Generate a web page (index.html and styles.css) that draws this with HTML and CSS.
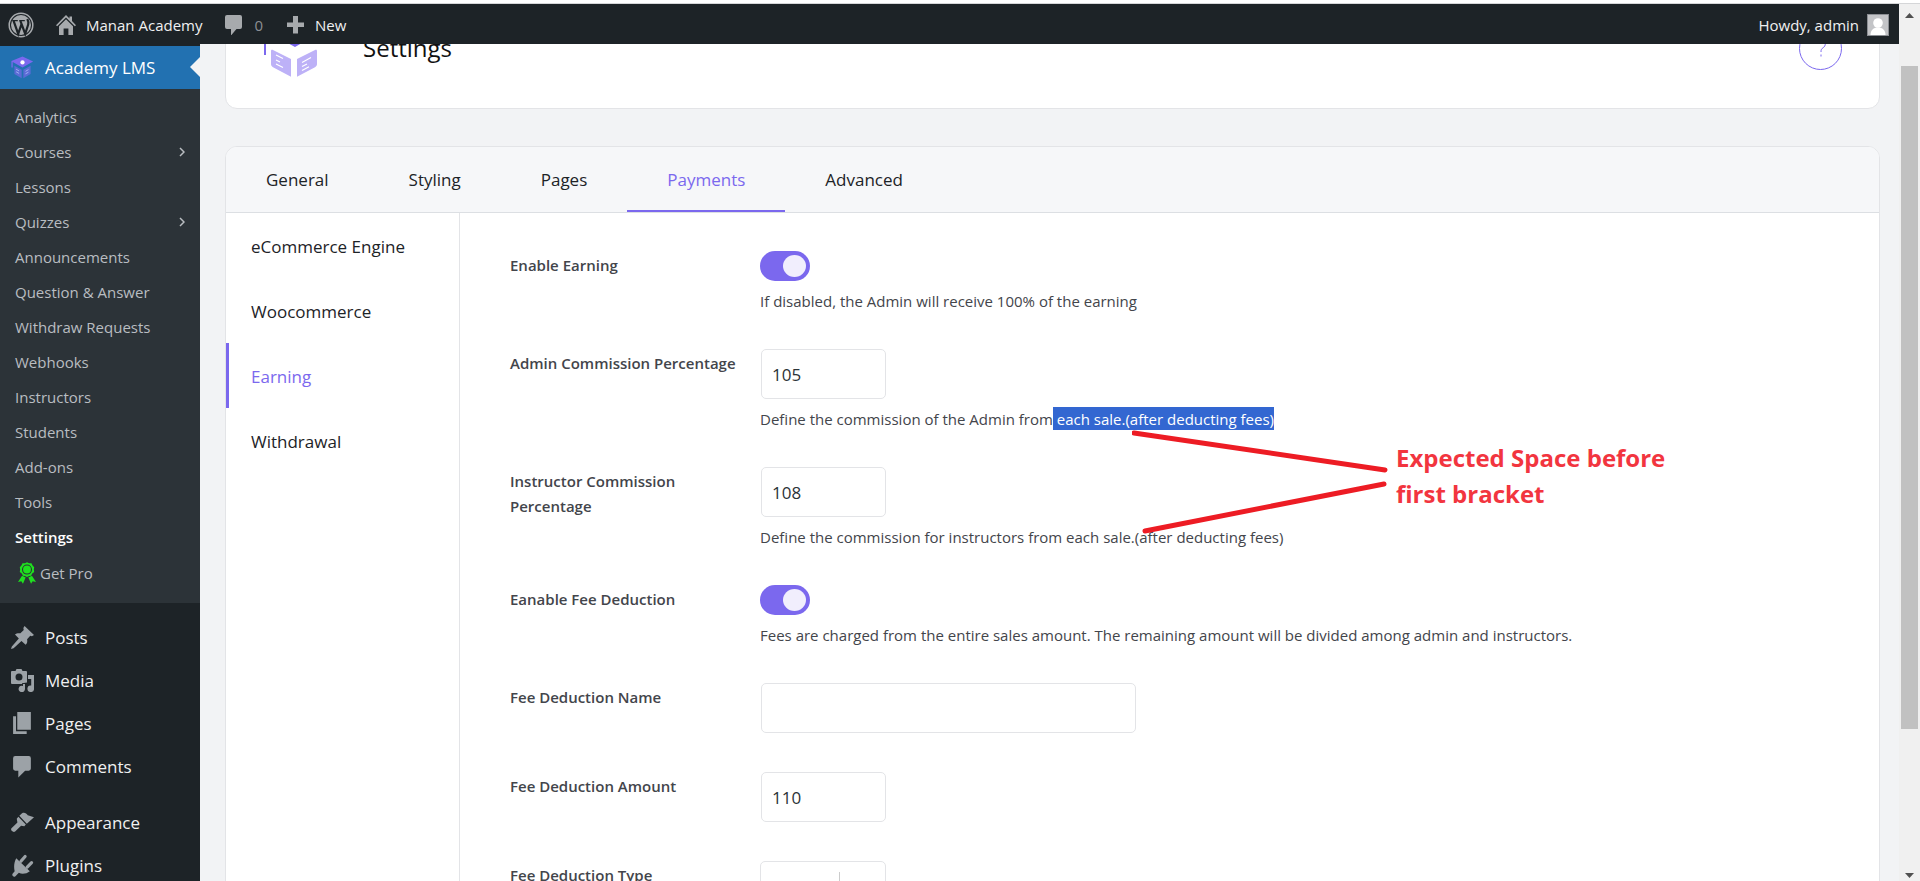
FILE: index.html
```html
<!DOCTYPE html>
<html lang="en">
<head>
<meta charset="utf-8">
<title>Settings - Academy LMS</title>
<meta name="viewport" content="width=device-width, initial-scale=1">
<link rel="stylesheet" href="styles.css">
</head>
<body>
<div class="window">
  <div class="page">
    <header class="adminbar">
      <a class="adminbar-item" href="#" aria-label="WordPress">
        <svg class="icon-wp" viewBox="0 0 26 26"><circle cx="13" cy="13" r="11.8" fill="none" stroke="#a7aaad" stroke-width="1.5"/><circle cx="13" cy="13" r="10" fill="#a7aaad"/><g fill="none" stroke="#1d2327" stroke-linejoin="miter"><path d="M4.2 8.6h5.6M11.2 8.6h5.6" stroke-width="1.2"/><path d="M5.6 8.8l4.6 13 3.3-9.6M12.4 8.8l4.8 13 3-9.3c.7-2.3.1-3.500-.9-5.400" stroke-width="2.200"/></g></svg>
      </a>
      <a class="adminbar-item" href="#">
        <svg class="icon-20" viewBox="0 0 20 20"><path fill="#a7aaad" d="M10 0l3.500 3.500V1.500H16V6l4 4.200-1.200 1.100L10 2.600 1.200 11.300 0 10.200zM10 4.200l7 7V20h-4.600v-6.500H7.600V20H3v-8.800z"/></svg>
        Manan Academy
      </a>
      <a class="adminbar-item muted" href="#">
        <svg class="icon-20" viewBox="0 0 20 20"><path fill="#a7aaad" d="M3 0h13a2 2 0 0 1 2 2v10a2 2 0 0 1-2 2h-3.500L7 20.500V14H3a2 2 0 0 1-2-2V2a2 2 0 0 1 2-2z"/></svg>
        0
      </a>
      <a class="adminbar-item" href="#">
        <svg class="icon-20" viewBox="0 0 20 20"><path fill="#a7aaad" d="M8 1h5v6.500h6v4.500h-6v6.500H8V12H2V7.500h6z"/></svg>
        New
      </a>
      <a class="adminbar-item account" href="#">
        Howdy, admin
        <svg class="avatar" viewBox="0 0 22 22"><rect x=".5" y=".5" width="21" height="21" fill="#c3c4c7" stroke="#8c8f94"/><circle cx="11" cy="9" r="4.800" fill="#fff"/><path d="M3.500 21c0-5 3-7.500 7.500-7.500s7.500 2.500 7.500 7.500z" fill="#fff"/></svg>
      </a>
    </header>

    <div class="body">
      <nav class="sidebar" aria-label="Main menu">
        <a class="menu-item current" href="#">
          <svg class="menu-icon logo-small" viewBox="0 0 54 54"><path fill="#7b68ee" d="M27 1L52 13 27 27 4 14v13H1V12z"/><circle cx="27" cy="15" r="5" fill="#fff"/><path fill="#5b6bd6" d="M8 23l17 9v20L8 42zM46 23l-17 9v20l17-10z"/><path d="M12 31l7 4M12 37l7 4M34 36l7-4M34 42l7-4" stroke="#a9b8f5" stroke-width="2"/></svg>
          Academy LMS
        </a>
        <ul class="submenu">
          <li><a href="#">Analytics</a></li>
          <li><a href="#">Courses<svg class="chevron" viewBox="0 0 6 10"><path d="M1 1l4 4-4 4"/></svg></a></li>
          <li><a href="#">Lessons</a></li>
          <li><a href="#">Quizzes<svg class="chevron" viewBox="0 0 6 10"><path d="M1 1l4 4-4 4"/></svg></a></li>
          <li><a href="#">Announcements</a></li>
          <li><a href="#">Question &amp; Answer</a></li>
          <li><a href="#">Withdraw Requests</a></li>
          <li><a href="#">Webhooks</a></li>
          <li><a href="#">Instructors</a></li>
          <li><a href="#">Students</a></li>
          <li><a href="#">Add-ons</a></li>
          <li><a href="#">Tools</a></li>
          <li><a class="active" href="#">Settings</a></li>
          <li><a class="get-pro" href="#"><svg class="ribbon" viewBox="0 0 20 24"><g fill="#1fe01f"><path d="M10 0l2.300 1.300 2.700 0 1.200 2.400L18 5.600 17.600 8.200 18 11l-2.200 1.600L14.500 15l-2.300.3L10 16.500 7.800 15.300 5.500 15 4.200 12.600 2 11l.4-2.800L2 5.600l1.800-1.900L5 1.300h2.700z"/><path d="M4.500 15l4 2-3 7-1.800-2.800L0 22zM15.500 15l-4 2 3 7 1.800-2.800L20 22z"/></g><circle cx="10" cy="8.200" r="5" fill="none" stroke="#2c3338" stroke-width="1.200"/></svg>Get Pro</a></li>
        </ul>
        <a class="menu-item" href="#">
          <svg class="menu-icon" viewBox="0 0 22 22"><path fill="#9ca2a7" d="M13 0l9 8.500-2 1.200-1.600-.3-3 3.200c.5 2.200 0 4-1.400 5.400l-4-3.700L2.500 21.300 0 22l.8-2.400L7.500 12 3.800 8.200C5.200 6.900 7 6.600 9 7l3.200-3.200-.4-1.800z"/></svg>
          Posts
        </a>
        <a class="menu-item" href="#">
          <svg class="menu-icon" viewBox="0 0 23 23"><path fill="#9ca2a7" fill-rule="evenodd" d="M1 2h3.500L5.500 0h5l1 2H15a1 1 0 0 1 1 1v10.500l-5 .8V15H1a1 1 0 0 1-1-1V3a1 1 0 0 1 1-1zM8 4.500a3.500 3.500 0 1 0 0 7 3.500 3.500 0 0 0 0-7z"/><path fill="#9ca2a7" d="M17 6h6v13.500a3.300 3.300 0 1 1-2.800-3V10H17zM12 15h2v5a3.200 3.200 0 1 1-2-3z"/></svg>
          Media
        </a>
        <a class="menu-item" href="#">
          <svg class="menu-icon" viewBox="0 0 22 22"><path fill="#9ca2a7" d="M6 0h13v17H6zM2 4h2.800v14.500H15V21H2z"/></svg>
          Pages
        </a>
        <a class="menu-item" href="#">
          <svg class="menu-icon" viewBox="0 0 22 22"><path fill="#9ca2a7" d="M4 1h13a2 2 0 0 1 2 2v10a2 2 0 0 1-2 2h-3.500L7 21.500V15H4a2 2 0 0 1-2-2V3a2 2 0 0 1 2-2z"/></svg>
          Comments
        </a>
        <a class="menu-item group-start" href="#">
          <svg class="menu-icon" viewBox="0 0 24 21"><path fill="#9ca2a7" d="M11.500.8C14-.5 16 .8 17.500 3l6.500 2-7.500 6.700L8.700 3.500zM7.700 4.500l7.800 8.200-1.600 1.600-3.400-.5-6.200 6C2.500 21.500-1.200 18.500.5 16.500l6.200-6L6 6.700z"/></svg>
          Appearance
        </a>
        <a class="menu-item" href="#">
          <svg class="menu-icon" viewBox="0 0 22 22"><path fill="#9ca2a7" d="M5 4l13 12.500c-3 2.500-7.500 3.200-10.500 1.500L4 21.500c-1.500 1-3.500-.8-2.500-2.500l2-2.500C2.500 12.500 3 7.500 5 4z"/><path d="M9.500 7l4-4.700M15.500 12.500l4.200-4.300" stroke="#9ca2a7" stroke-width="3" stroke-linecap="round"/></svg>
          Plugins
        </a>
      </nav>

      <main class="content">
        <section class="card page-head">
          <svg class="logo" viewBox="0 0 56 58"><path fill="#7b68ee" d="M31 0L57 13 31 28 7 15 2 12.500V36H0V12z"/><g fill="#bdb1f7"><path d="M9 31c-1.500-.8-2 0-2 1v13c0 1.500.6 2.400 2 3.200l18 9.600V40zM51 31c1.500-.8 2 0 2 1v13c0 1.500-.6 2.400-2 3.200L33 57.800V40z"/></g><path d="M12 36l7 3.500M12 41l4 2M12 45l7 3.500M38 43.500l9-5M38 47.500l5-2.500M38 51.500l7-3.700" stroke="#fff" stroke-width="1.200"/></svg>
          <h1>Settings</h1>
          <button class="help-button" type="button" aria-label="Help"><svg viewBox="0 0 12 18"><path d="M1.500 5a4.400 4.400 0 1 1 6.800 3.600C6.500 9.800 6 10.500 6 13M6 15.500v2"/></svg></button>
        </section>

        <section class="card settings">
          <nav class="tabs" aria-label="Settings sections">
            <a href="#">General</a>
            <a href="#">Styling</a>
            <a href="#">Pages</a>
            <a class="active" href="#">Payments</a>
            <a href="#">Advanced</a>
          </nav>
          <div class="panel">
            <nav class="side-tabs" aria-label="Payments sections">
              <a href="#">eCommerce Engine</a>
              <a href="#">Woocommerce</a>
              <a class="active" href="#">Earning</a>
              <a href="#">Withdrawal</a>
            </nav>
            <form class="fields">
              <div class="field">
                <label for="enable-earning">Enable Earning</label>
                <div class="control">
                  <input class="toggle" id="enable-earning" type="checkbox" checked>
                  <p>If disabled, the Admin will receive 100% of the earning</p>
                </div>
              </div>
              <div class="field">
                <label for="admin-commission">Admin Commission Percentage</label>
                <div class="control">
                  <input class="text short" id="admin-commission" type="text" inputmode="numeric" value="105">
                  <p>Define the commission of the Admin from<mark> each sale.(after deducting fees)</mark></p>
                </div>
              </div>
              <div class="field">
                <label for="instructor-commission">Instructor Commission Percentage</label>
                <div class="control">
                  <input class="text short" id="instructor-commission" type="text" inputmode="numeric" value="108">
                  <p>Define the commission for instructors from each sale.(after deducting fees)</p>
                </div>
              </div>
              <div class="field">
                <label for="fee-deduction">Eanable Fee Deduction</label>
                <div class="control">
                  <input class="toggle" id="fee-deduction" type="checkbox" checked>
                  <p>Fees are charged from the entire sales amount. The remaining amount will be divided among admin and instructors.</p>
                </div>
              </div>
              <div class="field">
                <label for="fee-name">Fee Deduction Name</label>
                <div class="control"><input class="text" id="fee-name" type="text"></div>
              </div>
              <div class="field">
                <label for="fee-amount">Fee Deduction Amount</label>
                <div class="control"><input class="text short" id="fee-amount" type="text" inputmode="numeric" value="110"></div>
              </div>
              <div class="field">
                <label for="fee-type">Fee Deduction Type</label>
                <div class="control"><div class="select-box"><select id="fee-type"><option></option></select></div></div>
              </div>
            </form>
          </div>
        </section>

        <svg class="note-lines" viewBox="0 0 256 104"><path d="M2 3l251 37M13 101l239-47"/></svg>
        <p class="note">Expected Space before<br>first bracket</p>
      </main>
    </div>
  </div>
  <div class="scrollbar" aria-hidden="true">
    <svg viewBox="0 0 9 5"><path d="M4.500 0L9 5H0z"/></svg>
    <div class="track"><div class="thumb"></div></div>
    <svg viewBox="0 0 9 5"><path d="M0 0h9L4.500 5z"/></svg>
  </div>
</div>
</body>
</html>
```
FILE: styles.css
```css
* { box-sizing: border-box; }

body {
  margin: 0;
  font-family: "Open Sans", "Noto Sans", sans-serif;
  font-size: 15px;
  color: #1d2327;
  background: #f2f3f5;
}

a { color: inherit; text-decoration: none; }
p, h1, ul { margin: 0; padding: 0; }
ul { list-style: none; }
svg { display: block; flex: none; }

.window {
  display: flex;
  height: 100vh;
  overflow: hidden;
  border-top: 3px solid #fff;
}

.page {
  flex: 1;
  min-width: 0;
  display: flex;
  flex-direction: column;
  border-top: 1px solid #d5d6d8;
}

/* Admin bar */
.adminbar {
  display: flex;
  align-items: center;
  flex: none;
  gap: 22px;
  height: 40px;
  padding: 2px 10px 0 8px;
  background: #1d2327;
  color: #f0f0f1;
}
.adminbar-item { display: flex; align-items: center; gap: 10px; line-height: 24px; }
.adminbar-item.muted { color: #8c8f94; }
.account { margin-left: auto; gap: 8px; }
.icon-wp { width: 26px; height: 26px; }
.icon-20 { width: 20px; height: 20px; }
.avatar { width: 22px; height: 22px; }

.body { flex: 1; min-height: 0; display: flex; }

/* Sidebar */
.sidebar {
  flex: none;
  width: 200px;
  padding-top: 2px;
  overflow: hidden;
  background: #1d2327;
  color: #f0f0f1;
}
.menu-item {
  position: relative;
  display: flex;
  align-items: center;
  gap: 11px;
  height: 43px;
  padding-left: 11px;
  font-size: 17px;
}
.menu-item.current { background: #2271b1; color: #fff; }
.menu-item.current::after {
  content: "";
  position: absolute;
  right: 0;
  top: 11px;
  border: 10px solid transparent;
  border-left: 0;
  border-right-color: #f2f3f5;
}
.menu-item.group-start { margin-top: 13px; }
.menu-icon { width: 23px; height: 23px; }
.submenu {
  margin-bottom: 13px;
  padding: 10px 0 12px;
  background: #2c3338;
  color: #b9bdc1;
}
.submenu a {
  display: flex;
  align-items: center;
  height: 35px;
  padding: 0 15px;
}
.submenu .active { color: #fff; font-weight: 600; }
.submenu .get-pro { padding-left: 18px; gap: 4px; height: 37px; }
.ribbon { width: 18px; height: 22px; }
.chevron { width: 6px; height: 10px; margin-left: auto; fill: none; stroke: #b9bdc1; stroke-width: 1.5; }

/* Content */
.content {
  position: relative;
  flex: 1;
  min-width: 0;
  padding: 0 19px 0 25px;
  overflow: hidden;
}
.card {
  background: #fff;
  border: 1px solid #e3e4e7;
  border-radius: 12px;
}
.page-head {
  display: flex;
  align-items: center;
  height: 125px;
  margin: -60px 0 37px;
  padding: 3px 37px 0 38px;
}
.logo { width: 56px; height: 58px; }
.page-head h1 { margin-left: 43px; font-size: 24px; line-height: 32px; font-weight: 500; color: #111; }
.help-button {
  display: grid;
  place-items: center;
  width: 43px;
  height: 43px;
  margin-left: auto;
  padding: 0;
  border: 1px solid #7b68ee;
  border-radius: 50%;
  background: #fff;
}
.help-button svg { width: 12px; height: 18px; fill: none; stroke: #7b68ee; stroke-width: 1; }

.settings { min-height: 100vh; overflow: hidden; }
.tabs {
  display: flex;
  height: 66px;
  background: #f6f7f9;
  border-bottom: 1px solid #dcdfe3;
}
.tabs a {
  display: flex;
  align-items: center;
  padding: 2px 40px 0;
  border-bottom: 2px solid transparent;
  font-size: 17px;
  font-weight: 500;
}
.tabs .active { color: #7b68ee; border-color: #7b68ee; }

.panel { display: flex; min-height: 100vh; }
.side-tabs { flex: none; width: 234px; border-right: 1px solid #e3e4e7; }
.side-tabs a {
  display: flex;
  align-items: center;
  height: 65px;
  padding: 2px 0 0 22px;
  border-left: 3px solid transparent;
  font-size: 17px;
  font-weight: 500;
}
.side-tabs .active { color: #7b68ee; border-color: #7b68ee; }

.fields {
  flex: 1;
  min-width: 0;
  display: flex;
  flex-direction: column;
  gap: 36px;
  padding: 38px 50px;
}
.field { display: flex; min-height: 53px; }
.field label {
  flex: none;
  width: 250px;
  padding: 2px 16px 0 0;
  font-size: 15px;
  line-height: 25px;
  font-weight: 600;
  color: #43454b;
}
.control { flex: 1; display: flex; flex-direction: column; align-items: flex-start; gap: 8px; }
.control p { line-height: 24px; font-size: 15px; color: #43454b; }
mark { padding: 2px 0 1px; background: #3367d1; color: #fff; }

.toggle {
  appearance: none;
  display: flex;
  align-items: center;
  justify-content: flex-end;
  width: 50px;
  height: 30px;
  margin: 0;
  padding: 4px;
  border-radius: 15px;
  background: #7b68ee;
}
.toggle::before { content: ""; width: 23px; height: 22px; border-radius: 50%; background: #f1eefd; }

.text {
  width: 375px;
  height: 50px;
  margin: 0 0 0 1px;
  padding: 0 10px;
  border: 1px solid #e3e4e7;
  border-radius: 5px;
  background: #fff;
  font: 17px "Open Sans", "Noto Sans", sans-serif;
  color: #2c3338;
}
.text.short { width: 125px; }
.select-box {
  position: relative;
  width: 126px;
  height: 50px;
  border: 1px solid #e3e4e7;
  border-radius: 5px;
}
.select-box::after {
  content: "";
  position: absolute;
  top: 10px;
  bottom: 10px;
  right: 45px;
  border-left: 1px solid #ccc;
}
.select-box select { appearance: none; width: 100%; height: 100%; border: 0; background: none; }

/* Reviewer note over the form */
.note-lines {
  position: absolute;
  left: 932px;
  top: 386px;
  width: 256px;
  height: 104px;
  fill: none;
  stroke: #ed1c24;
  stroke-width: 5;
  stroke-linecap: round;
}
.note {
  position: absolute;
  left: 1196px;
  top: 396px;
  font-size: 24px;
  line-height: 36px;
  font-weight: 700;
  color: #f2353f;
}

/* Scrollbar */
.scrollbar {
  flex: none;
  display: flex;
  flex-direction: column;
  align-items: center;
  width: 21px;
  padding: 9px 0 3px;
  border-top: 1px solid #d5d6d8;
  background: #f0f0f0;
}
.scrollbar svg { width: 9px; height: 5px; fill: #505050; }
.track { flex: 1; padding: 48px 0 144px; }
.thumb { width: 17px; height: 100%; background: #c1c1c1; }
```
